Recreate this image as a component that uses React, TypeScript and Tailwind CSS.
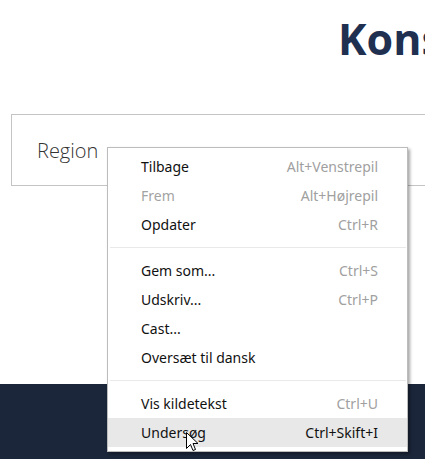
import React from "react";

type Item = { label: string; shortcut?: string; disabled?: boolean; active?: boolean };

const groups: Item[][] = [
  [
    { label: "Tilbage", shortcut: "Alt+Venstrepil" },
    { label: "Frem", shortcut: "Alt+Højrepil", disabled: true },
    { label: "Opdater", shortcut: "Ctrl+R" },
  ],
  [
    { label: "Gem som...", shortcut: "Ctrl+S" },
    { label: "Udskriv...", shortcut: "Ctrl+P" },
    { label: "Cast..." },
    { label: "Oversæt til dansk" },
  ],
  [
    { label: "Vis kildetekst", shortcut: "Ctrl+U" },
    { label: "Undersøg", shortcut: "Ctrl+Skift+I", active: true },
  ],
];

export default function App() {
  return (
    <div className="relative flex h-[459px] w-[425px] flex-col overflow-hidden bg-white">
      <div className="flex h-[114px] shrink-0 pl-[338px] pt-[14px]">
        <h1
          className="whitespace-nowrap text-[43px] font-bold leading-[50px] text-[#1f3050]"
          style={{ fontFamily: '"Open Sans", sans-serif' }}
        >
          Konsulenter
        </h1>
      </div>
      <div className="ml-[11px] flex h-[72px] w-[440px] shrink-0 items-center border border-[#c4c4c4] pl-[25px]">
        <span
          className="text-[20px] font-light text-[#333] pt-[1px]"
          style={{ fontFamily: '"Open Sans", sans-serif' }}
        >
          Region
        </span>
      </div>
      <div className="h-[198px] shrink-0" />
      <div className="flex-1 bg-[#1b263a]" />

      <div
        className="absolute left-[107px] top-[147px] w-[301px] border border-[#bcbcbc] bg-white py-[4px] shadow-[2px_2px_3px_rgba(0,0,0,0.35)]"
        style={{ fontFamily: '"Noto Sans", "Open Sans", sans-serif' }}
      >
        {groups.map((g, gi) => (
          <div key={gi}>
            {gi > 0 && <div className="my-[8px] ml-[2px] mr-px h-px bg-[#e9e9e9]" />}
            {g.map((it) => (
              <div
                key={it.label}
                className={`flex h-[29px] items-center justify-between pl-[33px] pr-[29px] text-[14px] ${
                  it.active ? "bg-[#e8e8e8]" : ""
                }`}
              >
                <span className={it.disabled ? "text-[#a3a3a3]" : "text-[#111]"}>{it.label}</span>
                {it.shortcut && (
                  <span className={it.active ? "text-[#111]" : "text-[#a0a0a0]"}>{it.shortcut}</span>
                )}
              </div>
            ))}
          </div>
        ))}
      </div>

      <svg
        className="absolute left-[186px] top-[432px]"
        width="13"
        height="21"
        viewBox="0 0 13 21"
      >
        <path
          d="M0.5 0.5 L0.5 16.5 L4.5 12.5 L7 18.5 L9.5 17.5 L7 11.5 L12 11.5 Z"
          fill="#fff"
          stroke="#000"
          strokeWidth="1"
        />
      </svg>
    </div>
  );
}
